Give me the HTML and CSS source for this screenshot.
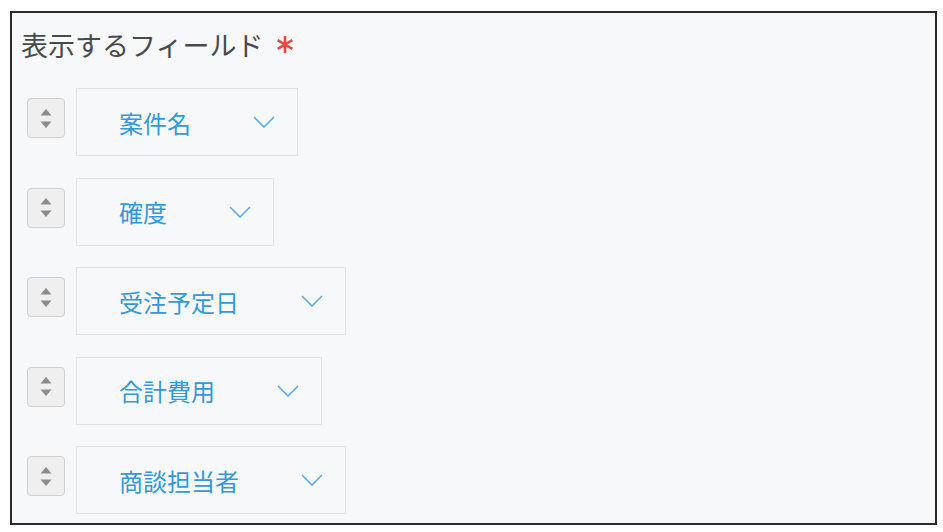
FILE: index.html
```html
<!DOCTYPE html>
<html lang="ja">
<head>
	<meta charset="UTF-8">
	<title>表示するフィールド</title>
	<link rel="stylesheet" href="styles.css">
</head>
<body>

<div class="panel">
	<div class="panel-title">表示するフィールド<svg class="required" width="16" height="17" viewBox="0 0 16 17"><line x1="8" y1="0" x2="8" y2="17" /><line x1="0.6" y1="4.2" x2="15.4" y2="12.8" /><line x1="0.6" y1="12.8" x2="15.4" y2="4.2" /></svg></div>

	<ul class="field-list">
		<li class="field-row">
			<span class="handle"><svg width="12" height="19" viewBox="0 0 12 19"><polygon points="6,0 11.5,6.5 0.5,6.5" /><polygon points="0.5,12.5 11.5,12.5 6,19" /></svg></span>
			<div class="field-select"><span class="field-name">案件名</span><svg class="chevron" width="22" height="12" viewBox="0 0 22 12"><polyline points="1,1 11,11 21,1" /></svg></div>
		</li>
		<li class="field-row">
			<span class="handle"><svg width="12" height="19" viewBox="0 0 12 19"><polygon points="6,0 11.5,6.5 0.5,6.5" /><polygon points="0.5,12.5 11.5,12.5 6,19" /></svg></span>
			<div class="field-select"><span class="field-name">確度</span><svg class="chevron" width="22" height="12" viewBox="0 0 22 12"><polyline points="1,1 11,11 21,1" /></svg></div>
		</li>
		<li class="field-row">
			<span class="handle"><svg width="12" height="19" viewBox="0 0 12 19"><polygon points="6,0 11.5,6.5 0.5,6.5" /><polygon points="0.5,12.5 11.5,12.5 6,19" /></svg></span>
			<div class="field-select"><span class="field-name">受注予定日</span><svg class="chevron" width="22" height="12" viewBox="0 0 22 12"><polyline points="1,1 11,11 21,1" /></svg></div>
		</li>
		<li class="field-row">
			<span class="handle"><svg width="12" height="19" viewBox="0 0 12 19"><polygon points="6,0 11.5,6.5 0.5,6.5" /><polygon points="0.5,12.5 11.5,12.5 6,19" /></svg></span>
			<div class="field-select"><span class="field-name">合計費用</span><svg class="chevron" width="22" height="12" viewBox="0 0 22 12"><polyline points="1,1 11,11 21,1" /></svg></div>
		</li>
		<li class="field-row">
			<span class="handle"><svg width="12" height="19" viewBox="0 0 12 19"><polygon points="6,0 11.5,6.5 0.5,6.5" /><polygon points="0.5,12.5 11.5,12.5 6,19" /></svg></span>
			<div class="field-select"><span class="field-name">商談担当者</span><svg class="chevron" width="22" height="12" viewBox="0 0 22 12"><polyline points="1,1 11,11 21,1" /></svg></div>
		</li>
	</ul>
</div>

</body>
</html>
```

FILE: styles.css
```css
body {
	margin: 0;
	background-color: white;
	font-family: "Noto Sans CJK JP", "Noto Sans", sans-serif;
}

.panel {
	box-sizing: border-box;
	width: 927px;
	height: 514px;
	margin: 11px 0 0 10px;
	border: 2px solid #2b2b2b;
	background-color: #f7f8fa;
	overflow: hidden;
}

.panel-title {
	display: flex;
	align-items: center;
	padding: 14px 0 0 9px;
	font-size: 27px;
	line-height: 36px;
	color: #4a4a4a;
}
.required {
	margin-left: 14px;
	margin-top: -2px;
}
.required line {
	stroke: #e8493c;
	stroke-width: 2.6;
}

.field-list {
	list-style-type: none;
	margin: 0;
	padding: 25px 0 0 15px;
}
.field-row {
	display: flex;
	align-items: flex-start;
	gap: 11px;
	margin-bottom: 21.5px;
}

.handle {
	box-sizing: border-box;
	display: flex;
	align-items: center;
	justify-content: center;
	width: 38px;
	height: 40px;
	margin-top: 10px;
	border: 1px solid #d0d0d0;
	border-radius: 4px;
	background-color: #efefef;
}
.handle polygon {
	fill: #8c8c8c;
}

.field-select {
	box-sizing: border-box;
	display: flex;
	align-items: center;
	height: 68px;
	padding: 0 22px 0 42px;
	border: 1px solid #e3e4e6;
}
.field-name {
	font-size: 24px;
	color: #3498db;
	margin-right: 62px;
}
.chevron polyline {
	fill: none;
	stroke: #5aace3;
	stroke-width: 1.6;
}
```
